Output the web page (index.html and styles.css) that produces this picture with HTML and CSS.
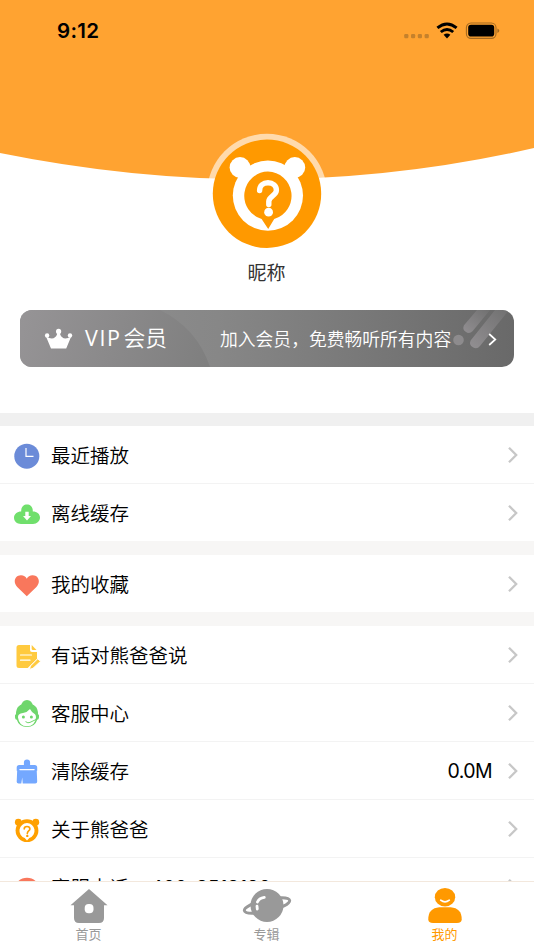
FILE: index.html
```html
<!DOCTYPE html>
<html lang="zh-CN">
<head>
<meta charset="utf-8">
<title>我的</title>
<link rel="stylesheet" href="styles.css">
</head>
<body>
<svg class="defs" width="0" height="0" aria-hidden="true">
  <symbol id="chevron" viewBox="0 0 12 18"><path d="M2 1.8 9.2 9 2 16.2" fill="none" stroke="#c7c7c7" stroke-width="2.3"/></symbol>
</svg>
<div class="screen">
  <header class="hero">
    <svg class="hero-bg" width="534" height="181" viewBox="0 0 534 181"><path d="M0 0H534V148Q272 208 0 153Z" fill="#ffa331"/></svg>
    <div class="status">
      <span class="time">9:12</span>
      <svg class="status-icons" width="100" height="24" viewBox="0 0 100 24">
        <g fill="#c5812c"><rect x="4.2" y="14" width="4.2" height="4.2" rx="1.2"/><rect x="11" y="14" width="4.2" height="4.2" rx="1.2"/><rect x="17.8" y="14" width="4.2" height="4.2" rx="1.2"/><rect x="24.6" y="14" width="4.2" height="4.2" rx="1.2"/></g>
        <g fill="none" stroke="#000" stroke-width="2.9"><path d="M37.4 7.9Q47 -.1 56.6 7.9"/><path d="M40.8 12Q47 6.8 53.2 12"/></g>
        <path d="M43.6 14.8Q47 12.2 50.4 14.8L47 18.4Z"/>
        <rect x="66.4" y="3" width="29.6" height="15.4" rx="4.6" fill="none" stroke="#a56a20" stroke-width="1.1"/>
        <rect x="68.2" y="4.8" width="26" height="11.8" rx="2.8"/>
        <path d="M97.4 8.4Q99.3 9.1 99.3 10.7Q99.3 12.3 97.4 13Z" fill="#a56a20"/>
      </svg>
    </div>
    <svg class="avatar" width="120" height="122" viewBox="0 0 120 122">
      <circle cx="60" cy="60.8" r="60" fill="#fff" fill-opacity=".6"/>
      <circle cx="60" cy="60.8" r="54.2" fill="#ff9900"/>
      <g fill="#fff"><circle cx="33" cy="34.5" r="10.4"/><circle cx="87.8" cy="34.5" r="10.4"/><circle cx="60.9" cy="62.6" r="35.1"/><path d="M43.2 32.5Q43.3 34.8 46 33.4L54 30 60 40 40 60 28 53Q30 49 31.5 46 32.4 44.6 31 43.8Z"/><path d="M78 32.5Q77.9 34.8 75.2 33.4L67 30 61 40 81 60 93.4 53Q91.4 49 89.9 46 89 44.6 90.4 43.8Z"/></g>
      <path d="M60.9 38.6A24.2 24.2 0 0 1 67.2 86L61.2 96 54.6 86A24.2 24.2 0 0 1 60.9 38.6Z" fill="#ff9900"/>
      <path d="M52.6 57.5C52.6 52.3 56.2 49.8 61 49.8S69.4 52.6 69.4 57.2C69.4 62.6 61.8 63 61.8 68.5V71.5" fill="none" stroke="#fff" stroke-width="5.4" stroke-linecap="round"/>
      <circle cx="61.6" cy="79.2" r="4.4" fill="#fff"/>
    </svg>
    <div class="nickname">昵称</div>
  </header>

  <div class="vip">
    <svg class="vip-bg" width="494" height="57" viewBox="0 0 494 57">
      <defs>
        <linearGradient id="base" x1="0" x2="1"><stop stop-color="#929293"/><stop offset=".4" stop-color="#878787"/><stop offset="1" stop-color="#696969"/></linearGradient>
        <linearGradient id="disc" gradientUnits="userSpaceOnUse" x1="0" y1="0" x2="185" y2="57"><stop stop-color="#969496"/><stop offset="1" stop-color="#7f7f7f"/></linearGradient>
        <linearGradient id="streak" x1="0" x2="1" y1="1" y2="0"><stop stop-color="#928f92"/><stop offset="1" stop-color="#707070"/></linearGradient>
      </defs>
      <path d="M0 0H494V57H0Z" fill="url(#base)"/>
      <path d="M0 0H140Q177 18 190 57H0Z" fill="url(#disc)"/>
      <circle cx="438.5" cy="30" r="5.3" fill="#8d8b8d"/>
      <path d="M457 0H470L452.5 21.3A5.3 5.3 0 0 1 444 15.2Z" fill="url(#streak)"/>
      <path d="M475 0H489L460 36A5.5 5.5 0 0 1 450.6 30.5Z" fill="url(#streak)"/>
      <g fill="#fff"><path d="M26 26.5Q32 30 35 27.2 37.5 25.5 37.5 21H39.7Q39.7 25.5 42.2 27.2 45.2 30 51.2 26.5L46.2 38.5H31Z"/><circle cx="27.1" cy="25.4" r="2.2"/><circle cx="38.6" cy="21.4" r="2.6"/><circle cx="50" cy="25.4" r="2.2"/></g>
      <path d="M469.2 24 475.3 29.5 469.2 35" fill="none" stroke="#fff" stroke-width="1.7"/>
    </svg>
    <span class="vip-title"><span class="latin">VIP</span>会员</span>
    <span class="vip-text">加入会员，免费畅听所有内容</span>
  </div>

  <main class="groups">
    <section class="group">
      <div class="row">
        <svg class="icon" width="28" height="30" viewBox="0 0 28 30"><circle cx="13.8" cy="15.2" r="12.5" fill="#6b8bd8"/><path d="M13 7V15.4H20.5" fill="none" stroke="#fff" stroke-width="1.2"/></svg>
        <span class="label">最近播放</span><svg class="arrow"><use href="#chevron"/></svg>
      </div>
      <div class="row">
        <svg class="icon" width="28" height="30" viewBox="0 0 28 30"><path d="M8.2 12.5C8 8 10.5 5.4 14 5.4S20 8 19.8 12.5C24 12.5 27 15 27 18.6S24 25 20 25H8C4 25 1 22.5 1 18.8S4.2 12.5 8.2 12.5Z" fill="#70df6c"/><path d="M12.3 12.8H15.7V17H18L14 21.5 10 17H12.3Z" fill="#fff"/></svg>
        <span class="label">离线缓存</span><svg class="arrow"><use href="#chevron"/></svg>
      </div>
    </section>
    <section class="group">
      <div class="row">
        <svg class="icon" width="28" height="30" viewBox="0 0 28 30"><path d="M13.8 26.2 4.2 17C-.5 12 2 5.4 7.8 5.3 10.5 5.2 12.8 6.7 13.8 8.8 14.8 6.7 17.1 5.2 19.8 5.3 25.6 5.4 28.1 12 23.4 17Z" fill="#f9775c"/></svg>
        <span class="label">我的收藏</span><svg class="arrow"><use href="#chevron"/></svg>
      </div>
    </section>
    <section class="group">
      <div class="row">
        <svg class="icon" width="28" height="30" viewBox="0 0 28 30"><path d="M6 4H17V9Q17 11 19 11H24V18L14.7 27H6Q3.5 27 3.5 24.5V6.5Q3.5 4 6 4Z" fill="#ffca3f"/><path d="M18.7 4 23.5 9H20Q18.7 9 18.7 7.7Z" fill="#ffca3f"/><path d="M7.5 14H18.5M7.5 19.2H17" stroke="#fff" stroke-width="1.2" stroke-linecap="round"/><path d="M24.6 17.8 27.6 20.3 20 27.3 16.5 28.4 17.4 25Z" fill="#ffca3f" stroke="#fff" stroke-width="1"/></svg>
        <span class="label">有话对熊爸爸说</span><svg class="arrow"><use href="#chevron"/></svg>
      </div>
      <div class="row">
        <svg class="icon" width="28" height="30" viewBox="0 0 28 30"><circle cx="14" cy="6.9" r="5.8" fill="#6fd66c"/><path d="M3 15Q3 4.5 14 4.5T25 15Q26.5 15.5 26 18.5Q25.8 20.8 24.2 20.8Q22 28 14 28T3.8 20.8Q2.2 20.8 2 18.5 1.5 15.5 3 15Z" fill="#6fd66c"/><path d="M5 18.5Q4.5 14.7 10 14 14.4 13.3 17 10Q19 14 22 15.3 23 16 23 18.5 22 27.2 14 27.2T5 18.5Z" fill="#fff"/><circle cx="10.4" cy="18" r="1.5" fill="#6fd66c"/><circle cx="18.4" cy="18" r="1.5" fill="#6fd66c"/><path d="M12.5 22.6Q15 24.5 17 23.4L23 20.5" fill="none" stroke="#6fd66c" stroke-width="1"/></svg>
        <span class="label">客服中心</span><svg class="arrow"><use href="#chevron"/></svg>
      </div>
      <div class="row">
        <svg class="icon" width="28" height="30" viewBox="0 0 28 30"><path d="M10.9 8V5.6A3.1 3.1 0 0 1 17.1 5.6V8H21.7Q24.2 8 24.2 10.5V13.8H3.7V10.5Q3.7 8 6.2 8ZM4.2 13H23.7L24.2 24.5Q24.2 26.5 22.2 26.5H9.7L9.2 20.5 8.3 26.5H5.5Q3.5 26.5 3.7 24.5Z" fill="#74a8ff"/><path d="M6.9 12.6H21.1" stroke="#fff" stroke-width="1.2" stroke-linecap="round"/></svg>
        <span class="label">清除缓存</span><span class="value">0.0M</span><svg class="arrow"><use href="#chevron"/></svg>
      </div>
      <div class="row">
        <svg class="icon" width="28" height="30" viewBox="0 0 28 30"><g fill="#ffa000"><circle cx="5.3" cy="7.2" r="3.4"/><circle cx="22.8" cy="7.2" r="3.4"/><circle cx="14" cy="15.6" r="11.4"/></g><path d="M14 8A7.7 7.7 0 0 1 16.3 23L14 25.6 11.7 23A7.7 7.7 0 0 1 14 8Z" fill="#fff"/><path d="M11.2 14Q11.2 11.5 14 11.5T16.9 13.9C16.9 15.6 14.3 15.8 14.3 18.6" fill="none" stroke="#ffa000" stroke-width="1.6" stroke-linecap="round"/><circle cx="14.3" cy="20.9" r="1.2" fill="#ffa000"/></svg>
        <span class="label">关于熊爸爸</span><svg class="arrow"><use href="#chevron"/></svg>
      </div>
      <div class="row">
        <svg class="icon" width="28" height="30" viewBox="0 0 28 30"><circle cx="14" cy="17.8" r="13" fill="#f9775c"/></svg>
        <span class="label">客服电话：</span><span class="phone">400-8518190</span><svg class="arrow"><use href="#chevron"/></svg>
      </div>
    </section>
  </main>

  <nav class="tabs">
    <div class="tab">
      <svg width="52" height="38" viewBox="0 0 52 38"><path d="M26 3 44.5 19.3H41V32Q41 37 36 37H16Q11 37 11 32V19.3H7.5Z" fill="#999"/><rect x="21.7" y="18" width="8.8" height="9.2" rx="4" fill="#fff"/></svg>
      <span>首页</span>
    </div>
    <div class="tab">
      <svg width="52" height="38" viewBox="0 0 52 38"><ellipse cx="26" cy="19.5" rx="23.2" ry="6" transform="rotate(-13 26 19.5)" fill="#fff" stroke="#999" stroke-width="3"/><circle cx="26" cy="19.4" r="16.5" fill="#999"/><path d="M16.4 16Q18 12.3 23.3 11.4M16 20.2 16.3 23" fill="none" stroke="#fff" stroke-width="2.8" stroke-linecap="round"/></svg>
      <span>专辑</span>
    </div>
    <div class="tab active">
      <svg width="52" height="38" viewBox="0 0 52 38"><ellipse cx="26" cy="11.2" rx="10.2" ry="9.3" fill="#ff9900"/><path d="M20.3 21.3H31.7Q42.7 22.3 42.7 33.2Q42.7 37 38 37H14Q9.3 37 9.3 33.2 9.3 22.3 20.3 21.3Z" fill="#ff9900"/><path d="M21.7 14.2Q26 17.5 30.3 14.2" fill="none" stroke="#fff" stroke-width="1.7" stroke-linecap="round"/></svg>
      <span>我的</span>
    </div>
  </nav>
</div>
</body>
</html>
```
FILE: styles.css
```css
* { box-sizing: border-box; }
body { margin: 0; background: #fff; font-family: "Noto Sans CJK SC", sans-serif; }
.defs { position: absolute; }
.screen { width: 534px; height: 950px; display: flex; flex-direction: column; overflow: hidden; position: relative; }
.hero { height: 310px; flex: none; position: relative; display: flex; flex-direction: column; align-items: center; }
.hero-bg { position: absolute; left: 0; top: 0; }
.status { width: 100%; height: 133px; padding: 20px 34px 0 57px; display: flex; justify-content: space-between; position: relative; }
.time { font: 600 20.5px/22px Inter, sans-serif; letter-spacing: .3px; }
.avatar { position: relative; flex: none; }
.nickname { position: relative; margin-top: 3px; margin-right: 1px; font-size: 19px; line-height: 28px; color: #333; }
.vip { height: 57px; flex: none; margin: 0 20px; border-radius: 12px; overflow: hidden; position: relative; display: flex; align-items: center; padding-left: 65px; color: #fff; white-space: nowrap; }
.vip-bg { position: absolute; left: 0; top: 0; }
.vip-title { position: relative; width: 135px; margin-top: -2px; font-size: 21.8px; line-height: 30px; font-weight: 350; }
.latin { font-family: "Open Sans", sans-serif; font-weight: 400; font-size: 21.5px; letter-spacing: 1.6px; margin-right: 2px; }
.vip-text { position: relative; margin-top: -2px; font-size: 17.8px; line-height: 28px; font-weight: 350; }
.groups { margin-top: 46px; border-top: 13px solid #f0f0f0; flex: 1; min-height: 0; overflow: hidden; }
.group { border-bottom: 14px solid #f7f6f5; }
.row { height: 58px; display: flex; align-items: center; padding: 1px 15px 0 13px; border-bottom: 1px solid #f3f3f3; }
.row:last-child { height: 57px; padding-top: 0; border-bottom: 0; }
.icon { flex: none; margin-right: 10px; position: relative; top: 1px; }
.label { font-size: 19.5px; line-height: 28px; font-weight: 350; color: #000; }
.arrow { width: 12px; height: 18px; margin-left: auto; flex: none; }
.value { margin-left: auto; margin-right: 15px; font: 19.5px/28px Inter, sans-serif; letter-spacing: -.6px; color: #000; }
.value + .arrow { margin-left: 0; }
.phone { margin-left: 2px; font: 19.2px/28px Inter, sans-serif; }
.tabs { height: 69px; flex: none; display: grid; grid-template-columns: repeat(3, 1fr); border-top: 1px solid #f3e8dd; background: #fff; }
.tab { display: flex; flex-direction: column; align-items: center; padding-top: 4px; padding-right: 1px; color: #999; font-size: 13px; line-height: 20px; }
.tab svg { flex: none; }
.tab.active { color: #ff9900; }
```
